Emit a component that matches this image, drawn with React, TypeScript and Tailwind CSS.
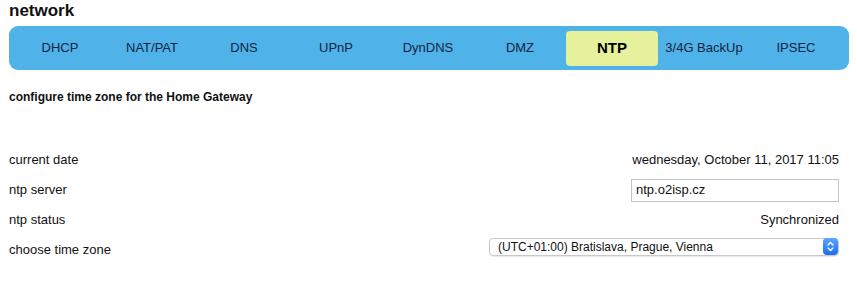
import React from "react";

const tabs = ["DHCP", "NAT/PAT", "DNS", "UPnP", "DynDNS", "DMZ", "NTP", "3/4G BackUp", "IPSEC"];

function Stepper() {
  return (
    <div className="flex h-[17px] w-[15px] items-center justify-center rounded-[4px] bg-gradient-to-b from-[#5aa6ff] to-[#1a6cf0]">
      <svg width="7" height="11" viewBox="0 0 7 11" fill="none" stroke="white" strokeWidth="1.4" strokeLinecap="round" strokeLinejoin="round">
        <path d="M1 4 L3.5 1.5 L6 4" />
        <path d="M1 7 L3.5 9.5 L6 7" />
      </svg>
    </div>
  );
}

export default function App() {
  const active = "NTP";
  return (
    <div className="h-[281px] w-[857px] bg-white text-[#111] [font-family:'Liberation_Sans',Arial,sans-serif]">
      <div className="px-[9px]">
        <h1 className="pt-px text-[17px] font-bold leading-[19px]">network</h1>
        <nav className="mt-[6px] flex h-[44px] w-[840px] items-center rounded-[9px] bg-[#4fb2e9] pl-[5px]">
          {tabs.map((t) => (
            <div
              key={t}
              className={
                t === active
                  ? "flex h-[35px] w-[92px] items-center justify-center rounded-[4px] bg-[#e5f29b] text-[15px] font-bold text-black"
                  : "flex h-[35px] w-[92px] items-center justify-center text-[13px] text-[#14243f]"
              }
            >
              {t}
            </div>
          ))}
        </nav>
        <p className="mt-[19px] text-[12px] font-bold leading-[16px]">configure time zone for the Home Gateway</p>

        <div className="mt-[40px] w-[830px] text-[13px]">
          <div className="flex h-[30px] items-center justify-between">
            <span>current date</span>
            <span>wednesday, October 11, 2017 11:05</span>
          </div>
          <div className="flex h-[30px] items-center justify-between">
            <span>ntp server</span>
            <div className="flex h-[23px] w-[208px] items-center border border-[#c4c4c4] px-[4px]">ntp.o2isp.cz</div>
          </div>
          <div className="flex h-[30px] items-center justify-between">
            <span>ntp status</span>
            <span>Synchronized</span>
          </div>
          <div className="flex h-[30px] items-center justify-between">
            <span>choose time zone</span>
            <div className="mb-[7px] flex h-[18px] w-[350px] items-center justify-between rounded-[4px] border border-[#c9c9c9] pl-[8px] text-[12px] shadow-[0_1px_1px_rgba(0,0,0,0.08)]">
              <span>(UTC+01:00) Bratislava, Prague, Vienna</span>
              <Stepper />
            </div>
          </div>
        </div>
      </div>
    </div>
  );
}
